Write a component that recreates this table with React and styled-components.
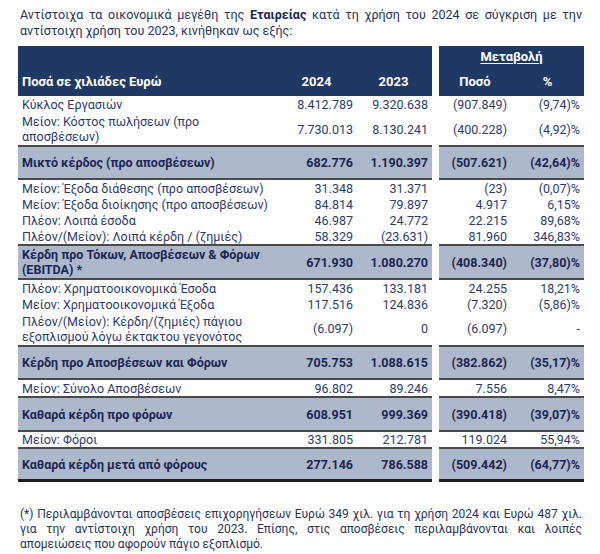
import React from 'react'
import styled, { createGlobalStyle } from 'styled-components'

const GlobalStyle = createGlobalStyle`
  body {
    margin: 0;
    background: #fff;
    font-family: Roboto, "Noto Sans", sans-serif;
  }
`

const Page = styled.div`
  width: 566px;
  padding: 7px 0 0 18px;
  color: #2b3a6e;
`

const Intro = styled.div`
  margin: 0 0 7px;
  padding: 0 2px;
  font-size: 12.5px;
  line-height: 16px;
  color: #26335f;
  b { color: #1c2654; }
`

const TextLine = styled.span`
  display: block;
  white-space: nowrap;
  text-align: ${p => (p.$full ? 'justify' : 'left')};
  text-align-last: ${p => (p.$full ? 'justify' : 'left')};
`

const Row = styled.div`
  display: flex;
  gap: 7px;
`

const Left = styled.div`
  width: 414px;
  display: grid;
  grid-template-columns: 260px 77px 77px;
  align-items: center;
  box-sizing: border-box;
  min-height: ${p => p.$h}px;
  background: ${p => (p.$kind === 'head' ? '#203864' : p.$kind === 'band' ? '#adb9ca' : '#fff')};
  border-top: ${p => (p.$kind === 'band' ? '2px solid #4a4a4a' : 'none')};
  border-bottom: ${p => (p.$last ? '3px solid #1e1e1e' : p.$kind === 'band' ? '2px solid #4a4a4a' : 'none')};
`

const Right = styled(Left)`
  width: 145px;
  grid-template-columns: 72px 73px;
`

const Label = styled.div`
  padding-left: 4px;
  font-size: ${p => (p.$kind === 'head' ? '13px' : '12.5px')};
  line-height: 15px;
  font-weight: ${p => (p.$kind === 'plain' ? 400 : 700)};
  color: ${p => (p.$kind === 'head' ? '#fff' : p.$kind === 'band' ? '#1c2654' : '#2b3a6e')};
  align-self: ${p => (p.$kind === 'head' ? 'end' : 'center')};
  padding-bottom: ${p => (p.$kind === 'head' ? '7px' : '0')};
`

const Num = styled.div`
  font-size: 12.5px;
  line-height: 15px;
  text-align: right;
  padding-right: ${p => p.$pr}px;
  font-weight: ${p => (p.$kind === 'plain' ? 400 : 700)};
  color: ${p => (p.$kind === 'band' ? '#1c2654' : '#2b3a6e')};
`

const HeadCell = styled.div`
  font-size: 13px;
  line-height: 15px;
  font-weight: 700;
  color: #fff;
  text-align: center;
  align-self: end;
  padding-bottom: 7px;
`

const RightHead = styled.div`
  width: 145px;
  height: 50px;
  background: #203864;
  display: grid;
  grid-template-columns: 72px 73px;
  grid-template-rows: 22px 1fr;
`

const Caption = styled.div`
  grid-column: 1 / 3;
  text-align: center;
  font-size: 13px;
  font-weight: 700;
  color: #fff;
  text-decoration: underline;
  text-underline-offset: 2px;
  padding-top: 3px;
`

const Note = styled.div`
  margin-top: 25px;
  padding: 0 2px;
  font-size: 12px;
  line-height: 15px;
  color: #26335f;
`

const rows = [
  { k: 'plain', h: 17, label: 'Κύκλος Εργασιών', v: ['8.412.789', '9.320.638', '(907.849)', '(9,74)%'] },
  { k: 'plain', h: 32, label: <>Μείον: Κόστος πωλήσεων (προ<br />αποσβέσεων)</>, v: ['7.730.013', '8.130.241', '(400.228)', '(4,92)%'] },
  { k: 'band', h: 35, label: 'Μικτό κέρδος (προ αποσβέσεων)', v: ['682.776', '1.190.397', '(507.621)', '(42,64)%'] },
  { k: 'plain', h: 16, label: 'Μείον: Έξοδα διάθεσης (προ αποσβέσεων)', v: ['31.348', '31.371', '(23)', '(0,07)%'] },
  { k: 'plain', h: 16, label: 'Μείον: Έξοδα διοίκησης (προ αποσβέσεων)', v: ['84.814', '79.897', '4.917', '6,15%'] },
  { k: 'plain', h: 16, label: 'Πλέον: Λοιπά έσοδα', v: ['46.987', '24.772', '22.215', '89,68%'] },
  { k: 'plain', h: 16, label: 'Πλέον/(Μείον): Λοιπά κέρδη / (ζημιές)', v: ['58.329', '(23.631)', '81.960', '346,83%'] },
  { k: 'band', h: 36, label: <>Κέρδη προ Τόκων, Αποσβέσεων &amp; Φόρων<br />(EBITDA) *</>, v: ['671.930', '1.080.270', '(408.340)', '(37,80)%'] },
  { k: 'plain', h: 16, label: 'Πλέον: Χρηματοοικονομικά Έσοδα', v: ['157.436', '133.181', '24.255', '18,21%'] },
  { k: 'plain', h: 16, label: 'Μείον: Χρηματοοικονομικά Έξοδα', v: ['117.516', '124.836', '(7.320)', '(5,86)%'] },
  { k: 'plain', h: 33, label: <>Πλέον/(Μείον): Κέρδη/(ζημιές) πάγιου<br />εξοπλισμού λόγω έκτακτου γεγονότος</>, v: ['(6.097)', '0', '(6.097)', '-'] },
  { k: 'band', h: 35, label: 'Κέρδη προ Αποσβέσεων και Φόρων', v: ['705.753', '1.088.615', '(382.862)', '(35,17)%'] },
  { k: 'plain', h: 16, label: 'Μείον: Σύνολο Αποσβέσεων', v: ['96.802', '89.246', '7.556', '8,47%'] },
  { k: 'band', h: 36, label: 'Καθαρά κέρδη προ φόρων', v: ['608.951', '999.369', '(390.418)', '(39,07)%'] },
  { k: 'plain', h: 15, label: 'Μείον: Φόροι', v: ['331.805', '212.781', '119.024', '55,94%'] },
  { k: 'band', h: 35, label: 'Καθαρά κέρδη μετά από φόρους', v: ['277.146', '786.588', '(509.442)', '(64,77)%'], last: true },
]

const App = () => {
  return (
    <>
      <GlobalStyle />
      <Page>
        <Intro>
          <TextLine $full>
            Αντίστοιχα τα οικονομικά μεγέθη της <b>Εταιρείας</b> κατά τη χρήση του 2024 σε σύγκριση με την
          </TextLine>
          <TextLine>αντίστοιχη χρήση του 2023, κινήθηκαν ως εξής:</TextLine>
        </Intro>

        <Row>
          <Left $kind="head" $h={50}>
            <Label $kind="head">Ποσά σε χιλιάδες Ευρώ</Label>
            <HeadCell>2024</HeadCell>
            <HeadCell>2023</HeadCell>
          </Left>
          <RightHead>
            <Caption>Μεταβολή</Caption>
            <HeadCell>Ποσό</HeadCell>
            <HeadCell>%</HeadCell>
          </RightHead>
        </Row>

        {rows.map((r, i) => (
          <Row key={i}>
            <Left $kind={r.k} $h={r.h} $last={r.last}>
              <Label $kind={r.k}>{r.label}</Label>
              <Num $kind={r.k} $pr={2}>{r.v[0]}</Num>
              <Num $kind={r.k} $pr={4}>{r.v[1]}</Num>
            </Left>
            <Right $kind={r.k} $h={r.h} $last={r.last}>
              <Num $kind={r.k} $pr={4}>{r.v[2]}</Num>
              <Num $kind={r.k} $pr={4}>{r.v[3]}</Num>
            </Right>
          </Row>
        ))}

        <Note>
          <TextLine $full>(*) Περιλαμβάνονται αποσβέσεις επιχορηγήσεων Ευρώ 349 χιλ. για τη χρήση 2024 και Ευρώ 487 χιλ.</TextLine>
          <TextLine $full>για την αντίστοιχη χρήση του 2023. Επίσης, στις αποσβέσεις περιλαμβάνονται και λοιπές</TextLine>
          <TextLine>απομειώσεις που αφορούν πάγιο εξοπλισμό.</TextLine>
        </Note>
      </Page>
    </>
  )
}

export default App
